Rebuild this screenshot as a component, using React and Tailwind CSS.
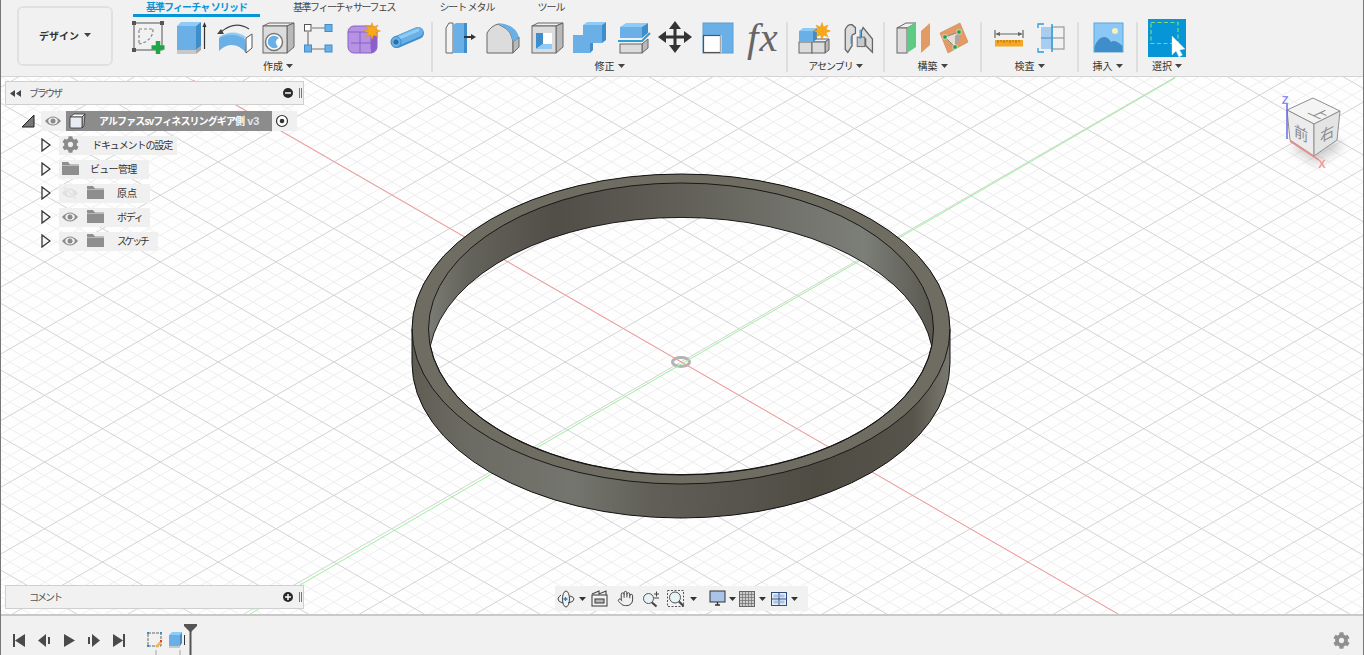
import React from "react";
import { Hand } from "lucide-react";
import { FaCog } from "react-icons/fa";

const B = "#6ab0e6", BD = "#3f8ec9", BL = "#8ecbf7", O = "#666666", G = "#dcdcdc", GD = "#b9b9b9";

const Ico = ({ dx = 0, children }) => (
  <svg width="40" height="36" viewBox={`${dx} 0 40 36`}>{children}</svg>
);
const Star = ({ x, y, r = 8 }) => {
  const pts = [];
  for (let i = 0; i < 16; i++) {
    const a = (i * Math.PI) / 8;
    const rr = i % 2 ? r * 0.5 : r;
    pts.push(`${x + rr * Math.sin(a)},${y - rr * Math.cos(a)}`);
  }
  return <polygon points={pts.join(" ")} fill="#f7a81b" stroke="#e48a00" strokeWidth=".4" />;
};
const Caret = ({ c = "#444" }) => (
  <svg width="7" height="4" viewBox="0 0 7 4" className="inline-block shrink-0"><polygon points="0,0 7,0 3.5,4" fill={c} /></svg>
);

const IconSketch = () => (
  <Ico>
    <rect x="6" y="4" width="28" height="27" fill="none" stroke="#555" />
    {[[6, 4], [34, 4], [6, 31]].map(([x, y], i) => <rect key={i} x={x - 2} y={y - 2} width="4" height="4" fill="#555" />)}
    <path d="M11 10H24M25 10Q25 22 11 25M11 11V25" fill="none" stroke="#888" strokeWidth="1.2" strokeDasharray="3 2" />
    <path d="M30 22V35M23.5 28.5H36.5" stroke="#1fa64a" strokeWidth="4.5" />
  </Ico>
);
const IconExtrude = () => (
  <Ico dx={3}>
    <rect x="8" y="7" width="19" height="24" fill={B} />
    <polygon points="8,7 12,3 32,3 27,7" fill={BL} />
    <polygon points="27,7 32,3 32,27 27,31" fill={BD} />
    <rect x="8" y="31" width="19" height="4" fill="#c8c8c8" />
    <polygon points="27,31 32,27 32,31 27,35" fill="#a8a8a8" />
    <path d="M35.5 30V7" stroke="#333" strokeWidth="1.2" />
    <polygon points="33.5,8 35.5,3 37.5,8" fill="#333" />
  </Ico>
);
const IconRevolve = () => (
  <Ico>
    <path d="M4 18Q18 9 31 18L26 22Q17 16 8 22Z" fill={BL} />
    <path d="M4 19Q17 12 30 20L31 34Q24 25 15 26Q9 27 4 32Z" fill={B} />
    <polygon points="31,19 37,15 37,29 31,34" fill="#fff" stroke="#555" />
    <path d="M6 13Q20 1 34 10" fill="none" stroke="#444" strokeWidth="1.2" />
    <polygon points="2,15 9,15 6,10" fill="#444" />
  </Ico>
);
const IconHole = () => (
  <Ico>
    <polygon points="5,7 11,4 36,4 29,7" fill="#f0f0f0" stroke={O} />
    <polygon points="29,7 36,4 36,28 29,34" fill={GD} stroke={O} />
    <rect x="5" y="7" width="24" height="27" fill={G} stroke={O} />
    <circle cx="16" cy="23" r="8.5" fill="#fff" stroke="#777" strokeWidth="1.5" />
    <path d="M10 21A6.500 6.500 0 0 1 21 19Q15 22 20 28A6.500 6.500 0 0 1 10 21Z" fill={B} />
  </Ico>
);
const IconPattern = () => (
  <Ico dx={2}>
    <path d="M13 9H26M9 13V26M13 30H26" stroke="#777" strokeWidth="1.2" />
    <rect x="5.500" y="5.500" width="6.500" height="6.500" fill="#fff" stroke="#555" />
    <rect x="26" y="5.500" width="7" height="7" fill={B} stroke={BD} />
    <rect x="5.500" y="26" width="7" height="7" fill={B} stroke={BD} />
    <rect x="26" y="26" width="7" height="7" fill={B} stroke={BD} />
  </Ico>
);
const IconForm = () => (
  <Ico dx={1}>
    <rect x="5" y="7" width="29" height="27" rx="6" fill="#b692e3" stroke="#8a5fc9" />
    <path d="M5 13H28V30M8 24H28M17 13V34" stroke="#8a5fc9" strokeWidth="1" fill="none" />
    <path d="M28 18L34 15V28Q33 32 28 34Z" fill="#8a5fc9" />
    <Star x={29} y={12} r={8.500} />
  </Ico>
);
const IconPipe = () => (
  <Ico dx={2}>
    <path d="M11 23L32 14" stroke={BD} strokeWidth="12" strokeLinecap="round" />
    <path d="M11 22L32 13" stroke={B} strokeWidth="10" strokeLinecap="round" />
    <path d="M13 19L32 11" stroke={BL} strokeWidth="3" strokeLinecap="round" />
    <ellipse cx="10" cy="23" rx="5" ry="5.500" fill={B} stroke={BD} />
    <circle cx="10" cy="23" r="2.500" fill="#2a6fa8" />
  </Ico>
);
const IconPress = () => (
  <Ico dx={-1}>
    <polygon points="9,9 12,4 16,4 16,34 9,34" fill="#f4f4f4" stroke={O} />
    <polygon points="16,6 19,4 30,4 30,34 16,34" fill={B} />
    <rect x="27" y="4" width="3" height="30" fill={BD} />
    <path d="M27 18H35" stroke="#333" strokeWidth="2" />
    <polygon points="34,15 39,18 34,21" fill="#333" />
  </Ico>
);
const IconFillet = () => (
  <Ico dx={-3}>
    <path d="M4 34V14Q8 7 15 5L22 9Q28 12 30 23V34Z" fill={G} stroke={O} />
    <polygon points="30,23 36,18 36,28 30,34" fill={GD} stroke={O} />
    <path d="M15 4Q32 5 36 18L30 23Q28 12 22 9Z" fill={B} />
  </Ico>
);
const IconShell = () => (
  <Ico dx={-3}>
    <polygon points="5,7 11,4 36,4 29,7" fill="#f0f0f0" stroke={O} />
    <polygon points="29,7 36,4 36,28 29,34" fill={GD} stroke={O} />
    <rect x="5" y="7" width="24" height="27" fill={G} stroke={O} />
    <rect x="9" y="14" width="16" height="16" fill="#fff" />
    <polygon points="9,14 16,14 16,25 9,30" fill={BD} />
    <polygon points="16,25 25,25 25,30 9,30" fill={BL} />
  </Ico>
);
const IconCombine = () => (
  <Ico dx={-1}>
    <polygon points="14,6 18,3 37,3 33,6" fill={BL} />
    <polygon points="33,6 37,3 37,21 33,24" fill={BD} />
    <rect x="14" y="6" width="19" height="18" fill={B} />
    <polygon points="21,16 21,34 24,31 24,24 21,24" fill={BD} />
    <rect x="4" y="16" width="17" height="18" fill={B} />
  </Ico>
);
const IconSplit = () => (
  <Ico dx={-1}>
    <polygon points="8,8 14,4 36,4 30,8" fill={BL} />
    <rect x="8" y="8" width="22" height="11" fill={B} />
    <polygon points="30,8 36,4 36,14 30,19" fill={BD} />
    <polygon points="30,25 36,20 36,29 30,34" fill={GD} stroke={O} />
    <rect x="8" y="25" width="22" height="9" fill={G} stroke={O} />
    <path d="M6 22H30L38 14" fill="none" stroke="#2d9cdb" strokeWidth="2" />
  </Ico>
);
const IconMove = () => (
  <Ico>
    <path d="M20 8V28M9 18H31" stroke="#333" strokeWidth="3" />
    <polygon points="20,2 26,10 14,10" fill="#333" />
    <polygon points="20,34 26,26 14,26" fill="#333" />
    <polygon points="3,18 11,12 11,24" fill="#333" />
    <polygon points="37,18 29,12 29,24" fill="#333" />
  </Ico>
);
const IconScale = () => (
  <Ico dx={1}>
    <rect x="5" y="4" width="30" height="30" fill={B} stroke="#5a9fd4" />
    <rect x="5.500" y="16.500" width="17" height="17" fill="#fff" stroke="#555" strokeWidth="1.200" />
    <path d="M23 16V34" stroke="#fff" />
  </Ico>
);
const IconFx = () => (
  <div className="w-[40px] h-[36px] flex items-center justify-center font-['Liberation_Serif',serif] italic text-[41px] leading-none text-[#666] whitespace-nowrap tracking-[1px]">fx</div>
);
const IconAsm = () => (
  <Ico>
    <polygon points="6,23 10,20 36,20 32,23" fill="#eee" stroke={O} />
    <polygon points="32,23 36,20 36,31 32,34" fill={GD} stroke={O} />
    <rect x="6" y="23" width="13" height="11" fill={G} stroke={O} />
    <rect x="19" y="23" width="13" height="11" fill={G} stroke={O} />
    <polygon points="6,12 10,9 24,9 20,12" fill={BL} />
    <polygon points="20,12 24,9 24,20 20,23" fill={BD} />
    <rect x="6" y="12" width="14" height="11" fill={B} />
    <Star x={29} y={12} r={8.500} />
  </Ico>
);
const IconJoint = () => (
  <Ico>
    <g transform="translate(3 1) scale(.85 .95)">
      <path d="M5 31V10Q8 4 13 5L17 8V14L13 16V27L8 34Z" fill={G} stroke={O} strokeWidth="1.500" />
      <path d="M26 8L37 20V34L29 27V20H24V12Z" fill={G} stroke={O} strokeWidth="1.500" />
      <rect x="19" y="18" width="9" height="10" fill="#c8c8c8" stroke={O} />
      <path d="M22.500 10V20M12 17V25" stroke="#2d8fd5" strokeWidth="1.300" />
    </g>
  </Ico>
);
const IconPlane = () => (
  <Ico>
    <polygon points="5,9 14,4 24,4 15,9" fill="#f0f0f0" stroke={O} />
    <rect x="5" y="9" width="10" height="25" fill={G} stroke={O} />
    <polygon points="15,9 24,3 24,28 15,34" fill="#5ecb84" />
    <polygon points="29,12 38,4 38,26 29,34" fill="#e39b66" />
  </Ico>
);
const IconPlane3 = () => (
  <Ico>
    <polygon points="6,14 26,4 34,23 14,34" fill="#e39b66" stroke="#cc8350" strokeWidth=".6" />
    <polygon points="11,18 25,13 21,28" fill="#e8ddd6" stroke="#888" />
    <polygon points="21,17 25,13 25,22 21,28" fill="#b0a69f" />
    {[[11, 18], [25, 13], [21, 28]].map(([x, y], i) => <rect key={i} x={x - 2} y={y - 2} width="4" height="4" fill="#16a34a" stroke="#fff" strokeWidth=".5" />)}
  </Ico>
);
const IconRuler = () => (
  <Ico dx={-1}>
    <path d="M6 11V19M34 11V19M8 15H32" stroke="#666" strokeWidth="1.200" fill="none" />
    <polygon points="6,15 11,13 11,17" fill="#666" />
    <polygon points="34,15 29,13 29,17" fill="#666" />
    <rect x="6" y="21" width="28" height="6.500" fill="#f5a623" />
    <path d="M9 21V24M12 21V23M15 21V24M18 21V23M21 21V24M24 21V23M27 21V24M30 21V23" stroke="#8a5a00" strokeWidth=".7" />
  </Ico>
);
const IconSection = () => (
  <Ico>
    <rect x="21" y="8" width="12" height="22" fill="none" stroke="#999" strokeWidth="1.200" />
    <path d="M21 19H33" stroke="#999" strokeWidth="1.200" />
    <rect x="10" y="8" width="11" height="22" fill="#a9cdee" />
    <path d="M10 19H21" stroke={BD} />
    <path d="M21 5V33" stroke="#2d9cdb" strokeWidth="1.500" />
    <path d="M13 5H7V9M13 33H7V29" stroke="#2d9cdb" strokeWidth="1.300" fill="none" />
  </Ico>
);
const IconImage = () => (
  <Ico>
    <rect x="6" y="4" width="29" height="29" fill="#8cc8f5" stroke="#5aa5de" />
    <circle cx="27" cy="12" r="3" fill="#fbeeba" />
    <path d="M6.500 28Q10 18 16 18Q20 18 23 23Q27 20 34.500 27V33H6.500Z" fill="#3f8ec9" />
  </Ico>
);
const IconSelect = () => (
  <svg width="40" height="38" viewBox="0 0 40 38">
    <rect x="1" y="0" width="38" height="38" fill="#0696d7" />
    <rect x="4" y="3.500" width="27" height="21" fill="none" stroke="#7fd97f" strokeWidth="1.200" strokeDasharray="4 2.500" />
    <polygon points="25,17 25,36 29,32 32,38 35.500,36 32.500,31 38,30" fill="#fff" stroke="#cfe" strokeWidth=".3" />
  </svg>
);

const Group = ({ w, cell, label, track = "", sep = true, children }) => (
  <>
    <div className={`flex flex-col items-center ${w}`}>
      <div className="flex justify-center h-[39px]">
        {React.Children.map(children, (c) => (
          <div className={`flex justify-center items-start shrink-0 ${cell}`}>{c}</div>
        ))}
      </div>
      <div className="flex items-center gap-[3px] h-[15px] text-[10px] leading-none text-[#333]">
        <span className={track}>{label}</span>
        <Caret />
      </div>
    </div>
    {sep && <div className="w-[2px] h-[50px] mt-[3px] bg-[#dedede] shrink-0" />}
  </>
);

const Toolbar = () => (
  <div className="h-[77px] shrink-0 bg-[#f1f1f1] border-b border-[#d4d4d4] flex">
    <div className="w-[124px] shrink-0 pl-[16px] pt-[6px]">
      <div className="w-[96px] h-[60px] pb-[2px] border-2 border-[#e0e0e0] rounded-md flex items-center justify-center gap-[5px] text-[10px] font-bold text-[#333]">
        <span>デザイン</span>
        <Caret />
      </div>
    </div>
    <div className="flex flex-col min-w-0">
      <div className="flex h-[19px] pl-[8px] text-[10px] leading-[14px] text-[#444] whitespace-nowrap">
        <div className="w-[127px] h-[17px] text-center font-bold text-[#0696d7] border-b-[3px] border-[#0696d7] tracking-[-0.9px]">基準フィーチャ ソリッド</div>
        <div className="w-[168px] text-center tracking-[-1.5px]">基準フィーチャ サーフェス</div>
        <div className="w-[78px] text-center tracking-[-1px]">シート メタル</div>
        <div className="w-[90px] text-center tracking-[-1px]">ツール</div>
      </div>
      <div className="flex h-[57px]">
        <Group w="w-[306px]" cell="w-[43.2px]" label="作成">
          <IconSketch /><IconExtrude /><IconRevolve /><IconHole /><IconPattern /><IconForm /><IconPipe />
        </Group>
        <Group w="w-[353px]" cell="w-[43.800px]" label="修正">
          <IconPress /><IconFillet /><IconShell /><IconCombine /><IconSplit /><IconMove /><IconScale /><IconFx />
        </Group>
        <Group w="w-[95px]" cell="w-[45px]" label="アセンブリ" track="tracking-[-1px]">
          <IconAsm /><IconJoint />
        </Group>
        <Group w="w-[95px]" cell="w-[42px]" label="構築">
          <IconPlane /><IconPlane3 />
        </Group>
        <Group w="w-[95px]" cell="w-[43px]" label="検査">
          <IconRuler /><IconSection />
        </Group>
        <Group w="w-[57px]" cell="w-[42px]" label="挿入">
          <IconImage />
        </Group>
        <Group w="w-[58px]" cell="w-[42px]" label="選択" sep={false}>
          <IconSelect />
        </Group>
      </div>
    </div>
  </div>
);

const S = 0.5765, STEP = 13.34;
const rows = Array.from({ length: 111 }, (_, i) => i - 55);
const gridLines = (major) =>
  rows
    .filter((k) => (Math.abs(k) % 5 === 0) === major)
    .flatMap((k) => {
      const y0 = 362 + S * (0 - 681) + k * STEP;
      const y1 = 362 + S * (1364 - 681) + k * STEP;
      const z0 = 362 - S * (0 - 681) + k * STEP;
      const z1 = 362 - S * (1364 - 681) + k * STEP;
      return [`M0 ${y0}L1364 ${y1}`, `M0 ${z0}L1364 ${z1}`];
    })
    .join("");

const OUTER = "M412 329A269 155 0 0 1 950 329L950 363A269 155 0 0 1 412 363Z";
const E_OUT = "M412 329A269 155 0 1 1 950 329A269 155 0 1 1 412 329Z";
const E_IN = "M428.500 329A252.500 146 0 1 1 933.500 329A252.500 146 0 1 1 428.500 329Z";
const HOLE = "M430.300 346A252.500 146 0 0 1 931.700 346A252.500 146 0 0 1 430.300 346Z";

const Viewport = () => (
  <svg className="absolute inset-0 w-full h-full" viewBox="1 77 1362 537">
    <defs>
      <linearGradient id="wallOut" x1="412" x2="950" y1="0" y2="0" gradientUnits="userSpaceOnUse">
        <stop offset="0" stopColor="#5f5c54" />
        <stop offset=".1" stopColor="#6c6b63" />
        <stop offset=".3" stopColor="#74756e" />
        <stop offset=".45" stopColor="#605e56" />
        <stop offset=".75" stopColor="#4f4c44" />
        <stop offset=".93" stopColor="#57544c" />
        <stop offset="1" stopColor="#7b7a70" />
      </linearGradient>
      <linearGradient id="wallIn" x1="429" x2="934" y1="0" y2="0" gradientUnits="userSpaceOnUse">
        <stop offset="0" stopColor="#7a7b74" />
        <stop offset=".08" stopColor="#63625b" />
        <stop offset=".25" stopColor="#514e47" />
        <stop offset=".5" stopColor="#615f57" />
        <stop offset=".72" stopColor="#72736c" />
        <stop offset=".86" stopColor="#7c7e78" />
        <stop offset="1" stopColor="#5a5850" />
      </linearGradient>
      <filter id="cubeShadow"><feGaussianBlur stdDeviation="5" /></filter>
    </defs>
    <rect x="0" y="77" width="1364" height="540" fill="#fefefe" />
    <path d={gridLines(false)} stroke="#eeeeee" strokeWidth="1" fill="none" />
    <path d={gridLines(true)} stroke="#d3d3d3" strokeWidth="1" fill="none" />
    <ellipse cx="681" cy="362" rx="8.500" ry="4.500" fill="none" stroke="#b4b4b4" strokeWidth="3" />
    <path d="M193 80L1118 614" stroke="#f79a9a" strokeWidth="1" />
    <path d="M1175 78L250 614" stroke="#9cf09c" strokeWidth="1" />

    <path d={OUTER + HOLE} fillRule="evenodd" fill="url(#wallOut)" />
    <path d={E_OUT + E_IN} fillRule="evenodd" fill="#6f6c62" />
    <path d={E_IN + HOLE} fillRule="evenodd" fill="url(#wallIn)" />
    <path d={HOLE} fill="none" stroke="#111" strokeWidth=".9" />
    <path d={E_IN} fill="none" stroke="#111" strokeWidth=".9" />
    <path d="M412 329A269 155 0 1 1 950 329L950 363A269 155 0 0 1 412 363Z" fill="none" stroke="#111" strokeWidth="1" />
    <path d="M412 329A269 155 0 0 0 950 329" fill="none" stroke="#111" strokeWidth=".9" />

    <polygon points="1290,148 1316,165 1345,146 1320,130" fill="#000" opacity=".16" filter="url(#cubeShadow)" />
    <polygon points="1287,110 1313,98 1340,111 1314,124" fill="#f4f4f4" stroke="#8f8f8f" />
    <polygon points="1287,110 1314,124 1314,156 1290,140" fill="#ececec" stroke="#8f8f8f" />
    <polygon points="1314,124 1340,111 1337,140 1314,156" fill="#e4e4e4" stroke="#8f8f8f" />
    <g fontFamily="'Noto Sans CJK JP',sans-serif" fontSize="15" fill="#8a8a8a" textAnchor="middle">
      <text transform="matrix(.95 .45 -.95 .45 1314 116)">上</text>
      <text transform="matrix(.95 .5 0 1 1301 139)">前</text>
      <text transform="matrix(.95 -.5 0 1 1327 139)">右</text>
    </g>
    <path d="M1287 104V139" stroke="#6a6ae8" strokeWidth="1.500" />
    <path d="M1290 141L1319 160" stroke="#ee8a8a" strokeWidth="1.500" />
    <text x="1285" y="104" fontSize="11" fontFamily="'Liberation Sans',sans-serif" fontWeight="700" fill="#8c8cf0" textAnchor="middle">Z</text>
    <text x="1322" y="168" fontSize="11" fontFamily="'Liberation Sans',sans-serif" fontWeight="700" fill="#f09a9a" textAnchor="middle">X</text>
  </svg>
);

const Eye = ({ c = "#8a8a8a" }) => (
  <svg width="18" height="12" viewBox="0 0 18 12">
    <path d="M1 6Q9 -3 17 6Q9 15 1 6Z" fill={c} />
    <ellipse cx="9" cy="6" rx="4.800" ry="3.400" fill="#f0f0f0" />
    <circle cx="9" cy="6" r="2.500" fill={c} />
  </svg>
);
const EyeOff = () => (
  <svg width="18" height="14" viewBox="0 0 18 14">
    <path d="M1 7Q9 -2 17 7Q9 16 1 7Z" fill="#e0e0e0" />
    <circle cx="9" cy="7" r="3" fill="#f0f0f0" />
    <path d="M3 1L15 13" stroke="#e6e6e6" strokeWidth="2" />
  </svg>
);
const Folder = () => (
  <svg width="17" height="13" viewBox="0 0 17 13">
    <path d="M0 0H6L8 2.500H17V13H0Z" fill="#8e8e8e" />
    <path d="M0 3.500H17" stroke="#c4c4c4" strokeWidth=".8" />
  </svg>
);
const Tri = () => (
  <svg width="10" height="14" viewBox="0 0 10 14" className="shrink-0">
    <polygon points="1,1 9,7 1,13" fill="#f6f6f6" stroke="#333" strokeWidth="1.300" />
  </svg>
);

const PanelHead = ({ back, label, sign }) => (
  <div className="flex items-center w-[299px] h-[24px] bg-[#f1f1f1] border border-[#cfcfcf] text-[10px] text-[#555]">
    <div className="w-[23px] pl-[4px] flex items-center">
      {back && (
        <svg width="12" height="7" viewBox="0 0 12 7"><polygon points="0,3.500 5,0 5,7" fill="#444" /><polygon points="6,3.500 11,0 11,7" fill="#444" /></svg>
      )}
    </div>
    <span className="leading-none tracking-[-2px]">{label}</span>
    <svg width="10" height="10" viewBox="0 0 10 10" className="ml-auto">
      <circle cx="5" cy="5" r="5" fill="#2a2a2a" />
      <path d={sign === "+" ? "M2 5H8M5 2V8" : "M2 5H8"} stroke="#fff" strokeWidth="1.500" />
    </svg>
    <svg width="4" height="12" viewBox="0 0 4 12" className="ml-[6px]"><path d="M.5 1V11M2.500 1V11" stroke="#777" /></svg>
  </div>
);

const Row = ({ w, pl, children }) => (
  <div className="flex items-center h-[19px] ml-[20px]">
    <div className="w-[18px] flex items-center pb-[2px]"><Tri /></div>
    <div className={`flex items-center h-[19px] pb-[2px] bg-[#f0f0f0] text-[10px] leading-none text-[#333] ${w} ${pl}`}>{children}</div>
  </div>
);

const Tree = () => (
  <div className="absolute left-[20px] top-[34px] flex flex-col gap-[5px]">
    <div className="flex items-center h-[20px]">
      <div className="w-[20px] flex items-center">
        <svg width="14" height="14" viewBox="0 0 14 14"><polygon points="1,13 13,1 13,13" fill="#777" stroke="#222" strokeWidth="1" /></svg>
      </div>
      <div className="flex items-center w-[256px] h-[20px] bg-[#f0f0f0]">
        <div className="w-[25px] flex justify-center -translate-x-[1px]"><Eye /></div>
        <div className="flex items-center w-[206px] h-[20px] bg-[#8c8c8c] text-white text-[10px] font-bold leading-none whitespace-nowrap">
          <svg width="18" height="16" viewBox="0 0 18 16" className="ml-[3px] mr-[12px] shrink-0">
            <polygon points="1,4 5,1 16,1 13,4" fill="#fff" stroke="#333" strokeWidth=".8" />
            <polygon points="13,4 16,1 15,13 13,15" fill="#bbb" stroke="#333" strokeWidth=".8" />
            <rect x="1" y="4" width="12" height="11" rx="1" fill="#e8ecf2" stroke="#333" strokeWidth=".8" />
          </svg>
          <span className="tracking-[-0.9px]">アルファスsvフィネスリングギア側</span>
          <span className="ml-[3px] text-[11px] text-[#dfe6ee] font-['Liberation_Sans',sans-serif]">v3</span>
        </div>
        <svg width="14" height="14" viewBox="0 0 14 14" className="ml-[3px]">
          <circle cx="7" cy="7" r="5.500" fill="#fff" stroke="#333" strokeWidth="1.200" />
          <circle cx="7" cy="7" r="2.300" fill="#333" />
        </svg>
      </div>
    </div>
    <Row w="w-[118px]" pl="pl-[3px]">
      <FaCog size={17} color="#8a8a8a" />
      <span className="ml-[13px] whitespace-nowrap tracking-[-1.1px]">ドキュメントの設定</span>
    </Row>
    <Row w="w-[90px]" pl="pl-[3px]">
      <Folder />
      <span className="ml-[11px] whitespace-nowrap tracking-[-0.7px]">ビュー管理</span>
    </Row>
    <Row w="w-[91px]" pl="pl-[2px]">
      <EyeOff />
      <span className="ml-[8px]"><Folder /></span>
      <span className="ml-[13px]">原点</span>
    </Row>
    <Row w="w-[91px]" pl="pl-[2px]">
      <Eye />
      <span className="ml-[8px]"><Folder /></span>
      <span className="ml-[13px] tracking-[-1.3px]">ボディ</span>
    </Row>
    <Row w="w-[99px]" pl="pl-[2px]">
      <Eye />
      <span className="ml-[8px]"><Folder /></span>
      <span className="ml-[13px] tracking-[-2.4px]">スケッチ</span>
    </Row>
  </div>
);

const NavCell = ({ w = "w-[22px]", ml = "", children }) => (
  <div className={`flex justify-center items-center shrink-0 ${w} ${ml}`}>{children}</div>
);
const NavCaret = ({ ml = "" }) => <NavCell w="w-[10px]" ml={ml}><Caret c="#333" /></NavCell>;

const NavBar = () => (
  <div className="absolute left-[554px] top-[509px] w-[253px] h-[25px] bg-[#f1f1f1] flex items-center">
    <NavCell>
      <svg width="18" height="18" viewBox="0 0 18 18" fill="none" stroke="#444" strokeWidth="1">
        <ellipse cx="9" cy="9" rx="3.500" ry="8" />
        <path d="M4 5Q1 7 1 9Q1 12 6 13M13 6Q17 7 17 9Q17 12 11 13" />
        <path d="M6.500 9H10.500M8.500 7V11" stroke="#1e7fd0" strokeWidth="1.300" />
      </svg>
    </NavCell>
    <NavCaret />
    <NavCell ml="ml-[1px]">
      <svg width="17" height="17" viewBox="0 0 17 17" fill="none" stroke="#444" strokeWidth="1.100">
        <path d="M1 4L8 1V4L15 1V5" />
        <rect x="1" y="5" width="15" height="11" fill="#f4f4f4" />
        <rect x="4" y="9" width="9" height="4" fill="#b6b6b6" />
      </svg>
    </NavCell>
    <NavCell ml="ml-[4px]"><Hand size={17} color="#444" strokeWidth={1.400} /></NavCell>
    <NavCell ml="ml-[4px]">
      <svg width="18" height="18" viewBox="0 0 18 18" fill="none">
        <circle cx="6.500" cy="8.500" r="5" fill="#e6f2f4" stroke="#555" />
        <path d="M10 12.500L14.500 16.500" stroke="#444" strokeWidth="2.200" />
        <path d="M12 4H17M14.500 1.500V6.500M12 8H17" stroke="#444" />
      </svg>
    </NavCell>
    <NavCell ml="ml-[3px]">
      <svg width="18" height="18" viewBox="0 0 18 18" fill="none">
        <rect x=".5" y=".5" width="16" height="16" stroke="#555" strokeDasharray="2 1.500" />
        <circle cx="8" cy="7.500" r="5.500" fill="#e6f2f4" stroke="#555" />
        <path d="M12 11.500L16.500 16" stroke="#444" strokeWidth="2.200" />
      </svg>
    </NavCell>
    <NavCaret ml="ml-[1px]" />
    <NavCell w="w-[20px]" ml="ml-[9px]">
      <svg width="17" height="17" viewBox="0 0 17 17">
        <rect x="1" y="1" width="15" height="11" fill="#a9c4e8" stroke="#333" />
        <path d="M6 15H11M8.500 12V15" stroke="#333" strokeWidth="1.300" />
      </svg>
    </NavCell>
    <NavCaret />
    <NavCell w="w-[20px]">
      <svg width="16" height="16" viewBox="0 0 16 16">
        <rect x=".5" y=".5" width="15" height="15" fill="#ccc" stroke="#666" />
        <path d="M3.500 1V15M6.500 1V15M9.500 1V15M12.500 1V15M1 3.500H15M1 6.500H15M1 9.500H15M1 12.500H15" stroke="#777" strokeWidth=".8" />
      </svg>
    </NavCell>
    <NavCaret />
    <NavCell w="w-[20px]" ml="ml-[2px]">
      <svg width="16" height="14" viewBox="0 0 16 14">
        <rect x=".5" y=".5" width="15" height="13" fill="#e8eef6" stroke="#2f4d7a" />
        <rect x="2.500" y="2.500" width="4.500" height="3" fill="#a9c4e8" />
        <rect x="9" y="2.500" width="4.500" height="3" fill="#a9c4e8" />
        <rect x="2.500" y="8.500" width="4.500" height="3" fill="#a9c4e8" />
        <rect x="9" y="8.500" width="4.500" height="3" fill="#a9c4e8" />
        <path d="M8 1V13M1 7H15" stroke="#2f4d7a" />
      </svg>
    </NavCell>
    <NavCaret />
  </div>
);

const TL = ({ children }) => (
  <div className="w-[25px] flex justify-center shrink-0">
    <svg width="14" height="15" viewBox="0 0 14 15" fill="#4a4a4a">{children}</svg>
  </div>
);

const Timeline = () => (
  <div className="relative h-[41px] shrink-0 bg-[#f1f1f1] border-t-2 border-[#c9c9c9] flex items-center pt-[9px] pl-[5px]">
    <TL><rect x="1" y="1" width="2" height="13" /><polygon points="13,1 13,14 3,7.500" /></TL>
    <TL><polygon points="9,1 9,14 1,7.500" /><rect x="11" y="4" width="2" height="7" /></TL>
    <TL><polygon points="2,1 2,14 13,7.500" /></TL>
    <TL><rect x="1" y="4" width="2" height="7" /><polygon points="5,1 5,14 13,7.500" /></TL>
    <TL><polygon points="1,1 1,14 11,7.500" /><rect x="11" y="1" width="2" height="13" /></TL>
    <div className="w-[20px] ml-[14px] flex justify-center shrink-0">
      <svg width="18" height="18" viewBox="0 0 18 18">
        <rect x="2" y="2" width="13" height="13" fill="none" stroke="#666" strokeDasharray="3 1" />
        <rect x="1" y="1" width="2" height="2" fill="#2d8fd5" /><rect x="14" y="1" width="2" height="2" fill="#2d8fd5" /><rect x="1" y="14" width="2" height="2" fill="#2d8fd5" />
        <path d="M10 16L15 11" stroke="#f5b64a" strokeWidth="2.500" /><rect x="14" y="9" width="2" height="2" fill="#e34" />
      </svg>
    </div>
    <div className="w-[20px] ml-[2px] flex justify-center shrink-0">
      <svg width="18" height="18" viewBox="0 0 18 18">
        <rect x="1" y="4" width="11" height="11" fill={B} />
        <polygon points="1,4 4,1 14,1 12,4" fill={BL} />
        <polygon points="12,4 14,1 14,12 12,15" fill={BD} />
        <rect x="1" y="15" width="11" height="2" fill="#c8c8c8" />
        <path d="M16.500 14V4" stroke="#333" />
      </svg>
    </div>
    <div className="absolute left-[154px] bottom-0 w-[1.500px] h-[5px] bg-[#cccccc]" />
    <div className="absolute left-[178px] bottom-0 w-[1.500px] h-[5px] bg-[#cccccc]" />
    <svg width="14" height="31" viewBox="0 0 14 31" className="absolute left-[183px] top-[8px]">
      <polygon points="0,0 13,0 13,2 7,8 6,8 0,2" fill="#555" />
      <rect x="5.500" y="7" width="2" height="24" fill="#555" />
    </svg>
    <div className="ml-auto mr-[13px]"><FaCog size={17} color="#909090" /></div>
  </div>
);

export default function App() {
  return (
    <div className="w-[1364px] h-[655px] overflow-hidden flex flex-col bg-[#f1f1f1] border-x border-[#777] font-['Noto_Sans_CJK_JP','Noto_Sans',sans-serif]">
      <Toolbar />
      <div className="relative flex-1 min-h-0 overflow-hidden">
        <Viewport />
        <div className="absolute left-[4px] top-[4px]"><PanelHead back label="ブラウザ" sign="-" /></div>
        <Tree />
        <div className="absolute left-[4px] top-[508px]"><PanelHead label="コメント" sign="+" /></div>
        <NavBar />
      </div>
      <Timeline />
    </div>
  );
}
